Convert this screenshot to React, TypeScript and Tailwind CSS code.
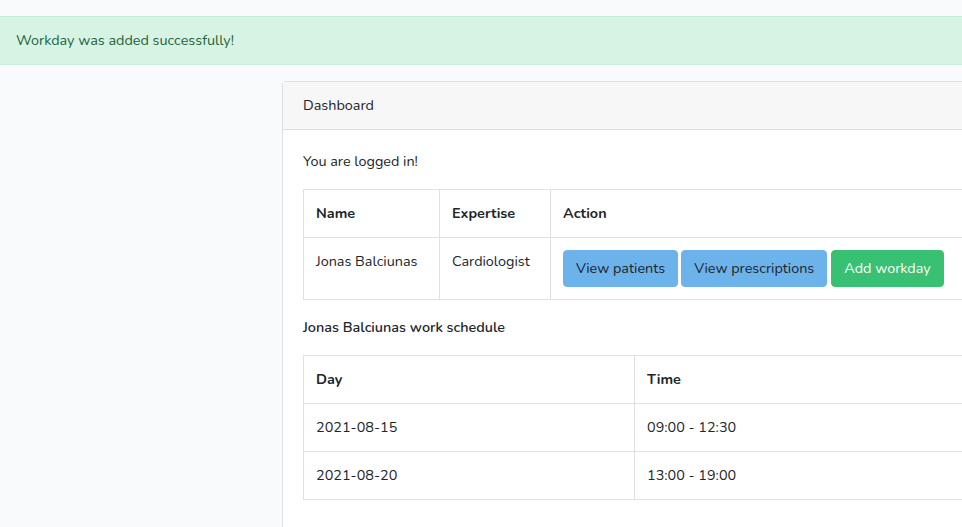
import React from 'react';

const font = { fontFamily: '"Nunito", Lato, "Noto Sans", sans-serif' };

const schedule = [
	{ day: '2021-08-15', time: '09:00 - 12:30' },
	{ day: '2021-08-20', time: '13:00 - 19:00' },
];

const cell = 'border border-[#dee2e6] px-3 py-3 align-top text-left';

export default function App() {
	return (
		<div
			className="w-[962px] h-[527px] overflow-hidden bg-[#f8fafc] text-[14.4px] leading-[1.6] text-[#212529] pt-4"
			style={font}
		>
			{/* Flash message */}
			<div className="border-y border-[#c7eed8] bg-[#d7f3e3] text-[#1d643b] px-4 py-3">
				Workday was added successfully!
			</div>

			<div className="mt-4 pl-[282px]">
				<div className="w-[704px] bg-white border border-[#dfdfdf] rounded-[4px]">
					<div className="bg-[#f7f7f7] border-b border-[#dfdfdf] px-5 py-3">Dashboard</div>

					<div className="px-5 pt-5 pb-16">
						<p className="mb-4">You are logged in!</p>

						<table className="w-[662px] border-collapse mb-4">
							<thead>
								<tr>
									<th className={`${cell} w-[136px] font-bold`}>Name</th>
									<th className={`${cell} w-[111px] font-bold`}>Expertise</th>
									<th className={`${cell} font-bold`}>Action</th>
								</tr>
							</thead>
							<tbody>
								<tr>
									<td className={cell}>Jonas Balciunas</td>
									<td className={cell}>Cardiologist</td>
									<td className={cell}>
										<div className="flex gap-[3px]">
											<button className="bg-[#6cb2eb] text-[#212529] rounded-[4px] px-3 py-[6px] border border-[#6cb2eb]">
												View patients
											</button>
											<button className="bg-[#6cb2eb] text-[#212529] rounded-[4px] px-3 py-[6px] border border-[#6cb2eb]">
												View prescriptions
											</button>
											<button className="bg-[#38c172] text-white rounded-[4px] px-3 py-[6px] border border-[#38c172] ml-[1px]">
												Add workday
											</button>
										</div>
									</td>
								</tr>
							</tbody>
						</table>

						<h6 className="font-semibold mb-4">Jonas Balciunas work schedule</h6>

						<table className="w-[662px] border-collapse">
							<thead>
								<tr>
									<th className={`${cell} w-[331px] font-bold`}>Day</th>
									<th className={`${cell} font-bold`}>Time</th>
								</tr>
							</thead>
							<tbody>
								{schedule.map((s) => (
									<tr key={s.day}>
										<td className={cell}>{s.day}</td>
										<td className={cell}>{s.time}</td>
									</tr>
								))}
							</tbody>
						</table>
					</div>
				</div>
			</div>
		</div>
	);
}
